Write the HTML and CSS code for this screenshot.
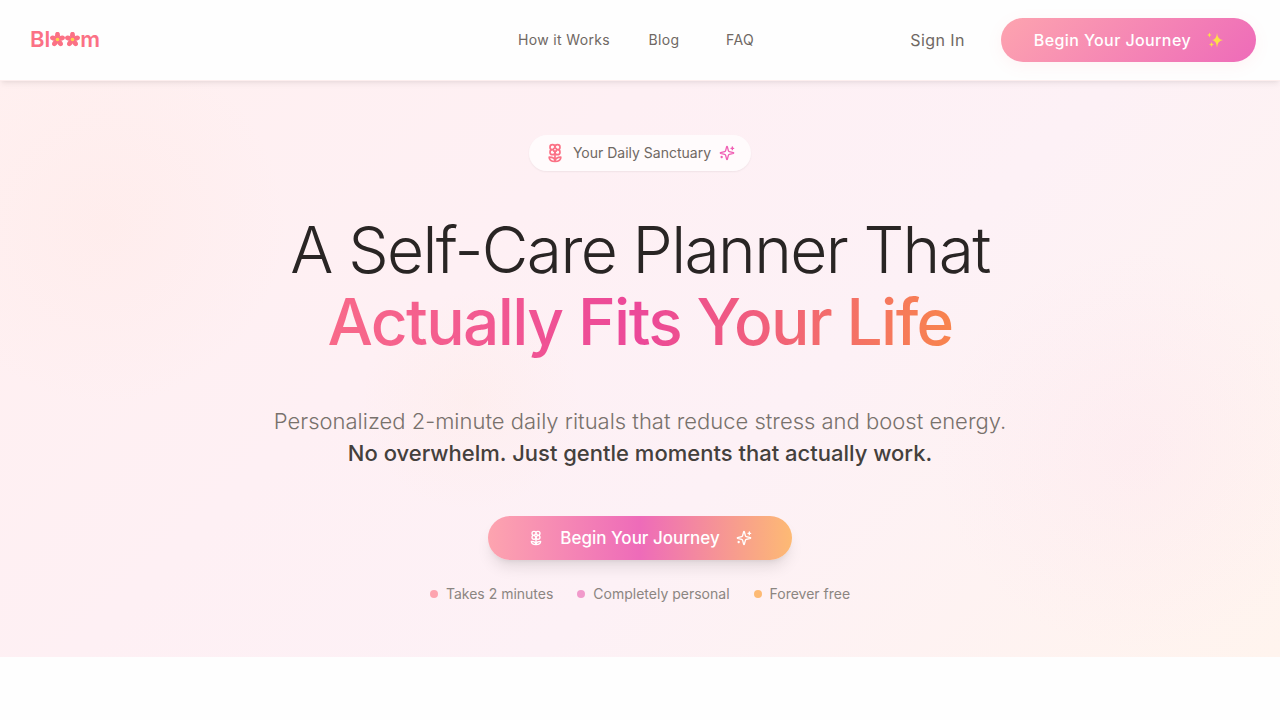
FILE: index.html
```html
<!DOCTYPE html>
<html lang="en">
<head>
<meta charset="utf-8">
<meta name="viewport" content="width=device-width, initial-scale=1">
<title>Bloom</title>
<link rel="stylesheet" href="styles.css">
</head>
<body>
<svg class="defs" aria-hidden="true">
  <symbol id="flower" viewBox="0 0 24 24"><path d="M12 5a3 3 0 1 1 3 3m-3-3a3 3 0 1 0-3 3m3-3v1M9 8a3 3 0 1 0 3 3M9 8h1m5 0a3 3 0 1 1-3 3m3-3h-1m-2 3v-1"/><circle cx="12" cy="8" r="2"/><path d="M12 10v12M12 22c4.2 0 7-1.667 7-5-4.2 0-7 1.667-7 5ZM12 22c-4.2 0-7-1.667-7-5 4.2 0 7 1.667 7 5Z"/></symbol>
  <symbol id="sparkles" viewBox="0 0 24 24"><path d="M9.937 15.5A2 2 0 0 0 8.5 14.063l-6.135-1.582a.5.5 0 0 1 0-.962L8.5 9.936A2 2 0 0 0 9.937 8.5l1.582-6.135a.5.5 0 0 1 .963 0L14.063 8.5A2 2 0 0 0 15.5 9.937l6.135 1.581a.5.5 0 0 1 0 .964L15.5 14.063a2 2 0 0 0-1.437 1.437l-1.582 6.135a.5.5 0 0 1-.963 0zM20 3v4M22 5h-4M4 17v2M5 18H3"/></symbol>
  <symbol id="blossom" viewBox="1 1 14 14"><g fill="#fb7185"><ellipse cx="8" cy="4" rx="2.3" ry="3.2"/><ellipse cx="8" cy="4" rx="2.3" ry="3.2" transform="rotate(72 8 8)"/><ellipse cx="8" cy="4" rx="2.3" ry="3.2" transform="rotate(144 8 8)"/><ellipse cx="8" cy="4" rx="2.3" ry="3.2" transform="rotate(216 8 8)"/><ellipse cx="8" cy="4" rx="2.3" ry="3.2" transform="rotate(288 8 8)"/></g><circle cx="8" cy="8" r="1.7" fill="#fcd34d"/></symbol>
</svg>
<header class="header">
  <a class="logo" href="#" aria-label="Bloom"><span>Bl</span><svg><use href="#blossom"/></svg><svg><use href="#blossom"/></svg><span>m</span></a>
  <nav class="nav">
    <a href="#">How it Works</a>
    <a href="#">Blog</a>
    <a href="#">FAQ</a>
  </nav>
  <div class="actions">
    <a class="signin" href="#">Sign In</a>
    <button class="cta cta-small" type="button">Begin Your Journey
      <svg class="glitter" viewBox="0 0 16 16" fill="#fde047"><path d="M10 1Q10.500 7.500 16 8Q10.500 8.500 10 15.500Q9.500 8.500 5 8Q9.500 7.500 10 1ZM2.500 .500Q2.700 2.800 4.500 3Q2.700 3.200 2.500 5.500Q2.300 3.200 .200 3Q2.300 2.800 2.500 .500ZM4.500 10Q4.700 12.300 7 12.500Q4.700 12.700 4.500 15Q4.300 12.700 2 12.500Q4.300 12.300 4.500 10Z"/></svg>
    </button>
  </div>
</header>
<main>
  <section class="hero">
    <div class="badge"><svg class="icon icon-rose"><use href="#flower"/></svg><span>Your Daily Sanctuary</span><svg class="icon icon-pink"><use href="#sparkles"/></svg></div>
    <h1 class="title">A Self-Care Planner That <span class="title-accent">Actually Fits Your Life</span></h1>
    <p class="lead">Personalized 2-minute daily rituals that reduce stress and boost energy. <strong>No overwhelm. Just gentle moments that actually work.</strong></p>
    <button class="cta cta-large" type="button"><svg class="icon"><use href="#flower"/></svg>Begin Your Journey<svg class="icon"><use href="#sparkles"/></svg></button>
    <ul class="points">
      <li class="rose">Takes 2 minutes</li>
      <li class="pink">Completely personal</li>
      <li class="amber">Forever free</li>
    </ul>
  </section>
</main>
</body>
</html>
```
FILE: styles.css
```css
* { box-sizing: border-box; }
body { margin: 0; background: #fefefe; color: #292524; font-family: Inter, "Liberation Sans", sans-serif; }
a { color: inherit; text-decoration: none; }
button { border: 0; font: inherit; cursor: pointer; }
.defs { position: absolute; width: 0; height: 0; }
.header {
  position: relative; z-index: 1;
  display: grid; grid-template-columns: 1fr auto 1fr; align-items: center;
  padding: 18px 24px; background: #fefefe;
  border-bottom: 1px solid #fdeeee;
  box-shadow: 0 4px 6px -1px rgb(0 0 0 / 6%), 0 2px 4px -2px rgb(0 0 0 / 6%);
}
.logo { display: flex; align-items: center; margin-left: 6px; padding-bottom: 2px; color: #fb7185; font-size: 22px; font-weight: 600; line-height: 32px; }
.logo svg { width: 15px; height: 15px; }
.nav { display: flex; gap: 32px; color: #6f6863; font-size: 14px; line-height: 20px; letter-spacing: 0.025em; }
.nav a { min-width: 44px; text-align: center; }
.actions { display: flex; align-items: center; justify-content: flex-end; gap: 36px; letter-spacing: 0.025em; }
.signin { color: #6f6863; }
.cta { display: flex; align-items: center; min-height: 44px; border-radius: 22px; color: #fff; font-weight: 500; }
.cta-small { gap: 16px; padding: 0 33px; font-size: 16px; background: linear-gradient(135deg, #fda4af, #ee6bb9); box-shadow: 0 4px 16px rgb(251 113 133 / 8%); letter-spacing: inherit; }
.glitter { width: 16px; height: 16px; }
.icon { width: 20px; height: 20px; fill: none; stroke: currentColor; stroke-width: 2; stroke-linecap: round; stroke-linejoin: round; }
.hero {
  display: flex; flex-direction: column; align-items: center; padding: 54px 24px 53px; text-align: center;
  background:
    radial-gradient(circle at 106px 144px, rgb(254 215 200 / 12%), transparent 180px),
    radial-gradient(circle at calc(100% - 144px) 370px, rgb(251 207 232 / 15%), transparent 200px),
    radial-gradient(circle at 470px 320px, rgb(254 215 170 / 8%), transparent 110px),
    linear-gradient(135deg, #fff0f0, #fef0f4 35%, #fdf1f6 60%, #fff4ee);
}
.badge { display: flex; align-items: center; gap: 8px; padding: 8px 16px; border-radius: 18px; background: rgb(255 255 255 / 70%); box-shadow: 0 1px 2px rgb(0 0 0 / 6%); color: #6f6863; font-size: 14px; line-height: 20px; }
.icon-rose { color: #fb7185; }
.icon-pink { width: 16px; height: 16px; color: #f05fb4; }
.title { width: 100%; max-width: 768px; margin: 43px 0 0; font-size: 64px; font-weight: 300; line-height: 72px; letter-spacing: -0.025em; }
.title-accent { display: block; font-weight: 500; color: transparent; background: linear-gradient(to right, #fb7185, #ec4899, #fb923c); background-clip: text; -webkit-background-clip: text; }
.lead { max-width: 768px; margin: 47px 0; color: #78716c; font-size: 22px; font-weight: 300; line-height: 32px; }
.lead strong { display: block; color: #44403c; font-weight: 500; }
.cta-large { gap: 16px; padding: 0 40px; font-size: 17px; background: linear-gradient(to right, #fda4af, #ee6bb9, #fdba74); box-shadow: 0 10px 15px -3px rgb(0 0 0 / 10%), 0 4px 6px -4px rgb(0 0 0 / 10%); }
.cta-large .icon { width: 16px; height: 16px; }
.points { display: flex; flex-wrap: wrap; justify-content: center; gap: 24px; margin: 24px 0 0; padding: 0; list-style: none; color: #8b8581; font-size: 14px; line-height: 20px; }
.points li { display: flex; align-items: center; gap: 8px; }
.points li::before { content: ""; width: 8px; height: 8px; border-radius: 50%; background: currentColor; }
.points .rose::before { background: #fda4af; }
.points .pink::before { background: #f19acb; }
.points .amber::before { background: #fdba74; }
```
